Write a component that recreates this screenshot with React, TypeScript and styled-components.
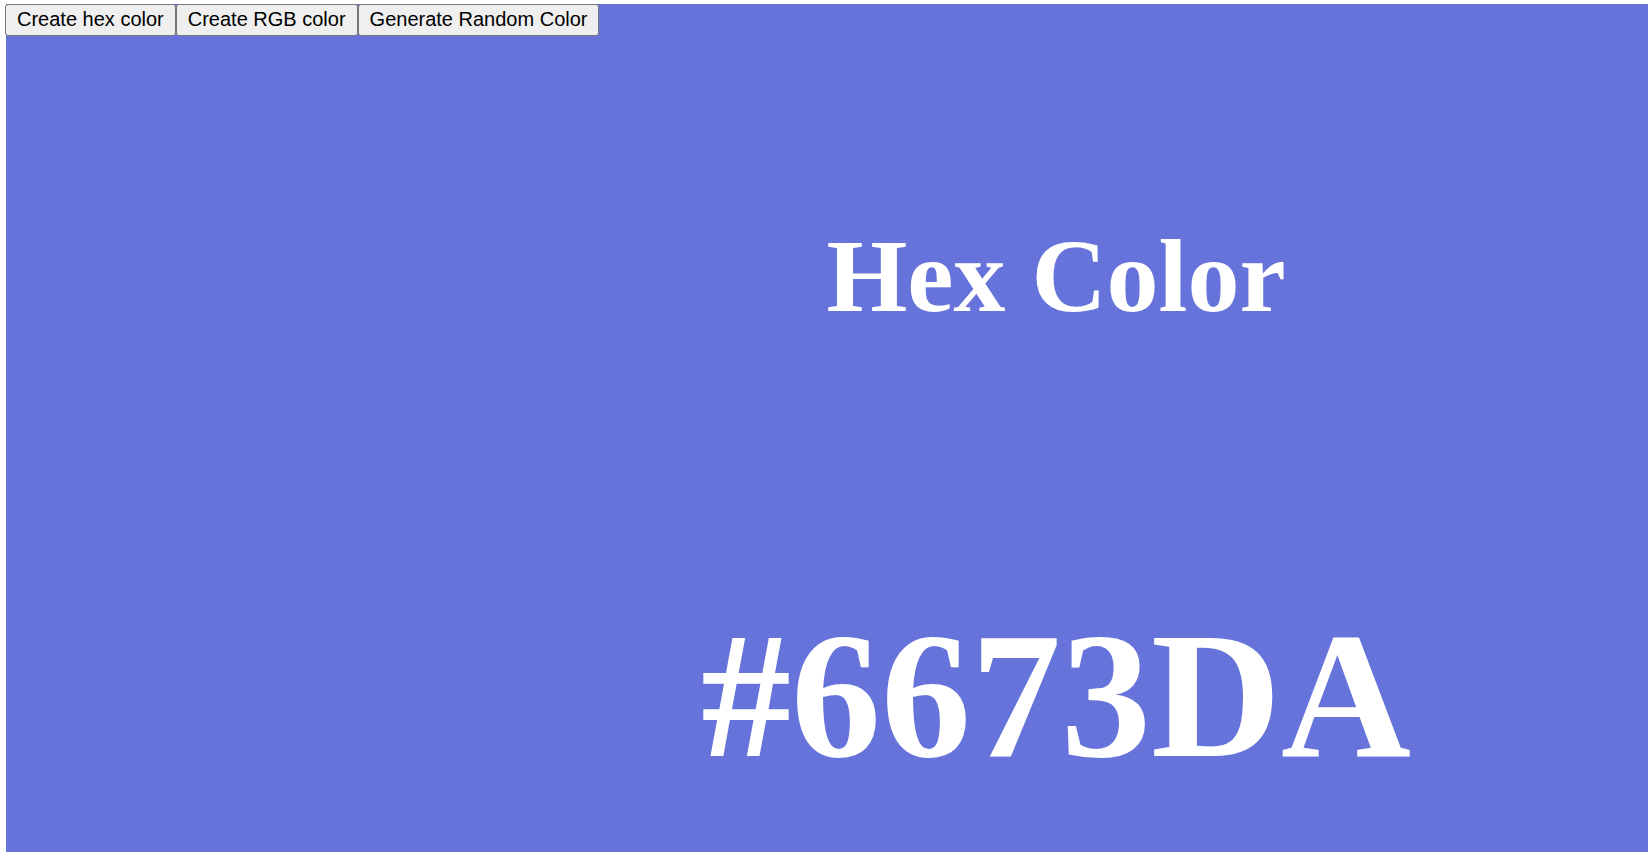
import React, { useState } from "react";
import styled, { createGlobalStyle } from "styled-components";

const GlobalStyle = createGlobalStyle`
  html, body {
    margin: 0;
    padding: 0;
    background: #ffffff;
    overflow: hidden;
  }
`;

const Page = styled.div<{ bg: string }>`
  display: flex;
  flex-direction: column;
  margin: 4px 0 0 6px;
  height: calc(100vh - 4px);
  background: ${({ bg }) => bg};
`;

const Toolbar = styled.div`
  display: flex;
  align-items: flex-start;
  margin-left: -1px;
`;

const ToolButton = styled.button`
  font-family: "Liberation Sans", Arial, sans-serif;
  font-size: 20px;
  line-height: 23px;
  color: #000000;
  background: #efefef;
  border: 1px solid #767676;
  border-radius: 3px;
  padding: 3px 11px 4px;
  margin: 0;
  cursor: pointer;

  &:hover {
    background: #e5e5e5;
  }
`;

const Display = styled.div`
  display: flex;
  flex-direction: column;
  align-items: center;
  padding-left: 458px;
  color: #ffffff;
  font-family: "Liberation Serif", "Times New Roman", serif;
  font-weight: bold;
`;

const Title = styled.h3`
  font-size: 104px;
  line-height: 1.15;
  margin: 180px 0 0;
`;

const Value = styled.h1`
  font-size: 180px;
  line-height: 1.15;
  margin: 256px 0 0;
`;

function App() {
  const [mode] = useState<"hex" | "rgb">("hex");
  const color = "#6673DA";

  return (
    <>
      <GlobalStyle />
      <Page bg={color}>
        <Toolbar>
          <ToolButton>Create hex color</ToolButton>
          <ToolButton>Create RGB color</ToolButton>
          <ToolButton>Generate Random Color</ToolButton>
        </Toolbar>
        <Display>
          <Title>{mode === "hex" ? "Hex Color" : "RGB Color"}</Title>
          <Value>{color}</Value>
        </Display>
      </Page>
    </>
  );
}

export default App;
